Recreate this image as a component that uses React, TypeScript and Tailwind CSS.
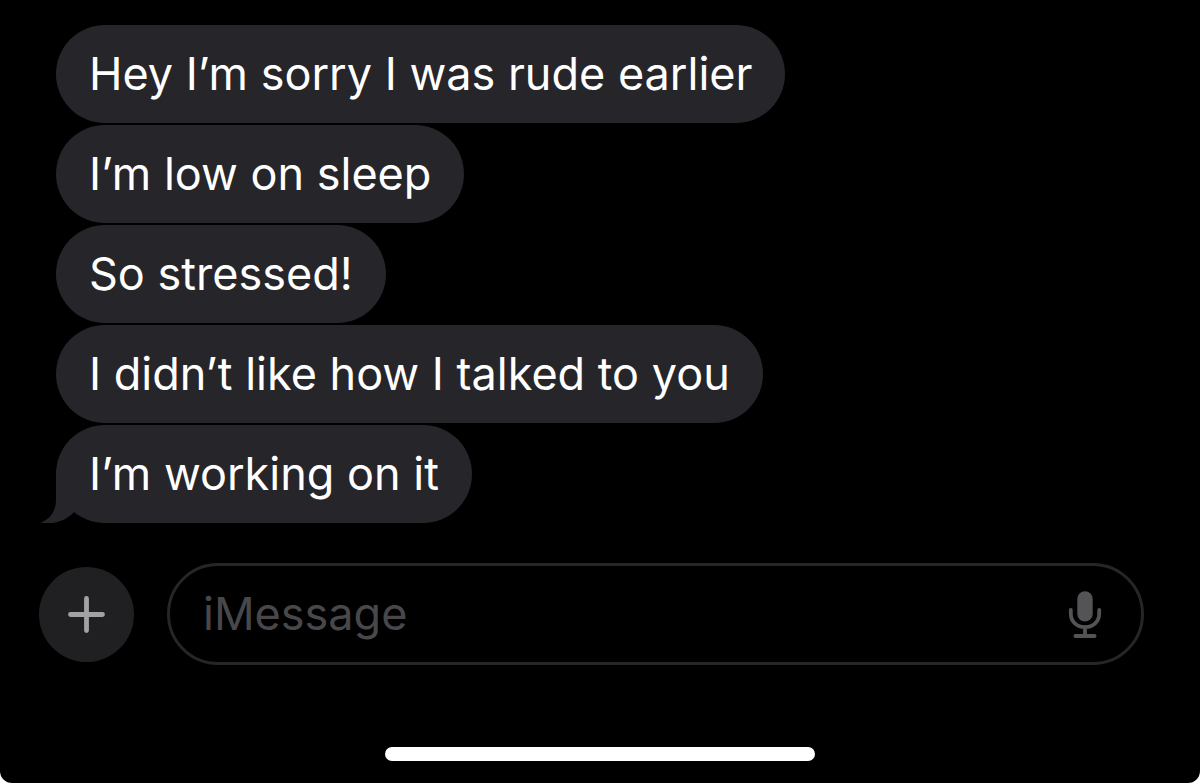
/**
 * Message Thread
 * Received messages, the composer and the home indicator
 */

import { memo, useState } from 'react';
import clsx from 'clsx';

const MESSAGES = [
  'Hey I’m sorry I was rude earlier',
  'I’m low on sleep',
  'So stressed!',
  'I didn’t like how I talked to you',
  'I’m working on it',
];

/**
 * Tail hanging off the lower left of the last bubble
 */
function BubbleTail() {
  return (
    <svg
      className="absolute bottom-0 -left-4 h-13 w-9 text-[#26252a]"
      viewBox="0 0 36 52"
      fill="currentColor"
      aria-hidden="true"
    >
      <path d="M16 0V29C16 40 10 48.5 0.5 51.4C12 54 25 50.5 33.5 41.5L36 38V0Z" />
    </svg>
  );
}

interface BubbleProps {
  text: string;
  /** Last message of the group */
  hasTail?: boolean;
}

const Bubble = memo(function Bubble({ text, hasTail = false }: BubbleProps) {
  return (
    <li
      className={clsx(
        'rounded-[49px] bg-[#26252a] px-[33px] py-[21px] text-[45px] leading-[56px] text-white',
        hasTail && 'relative'
      )}
    >
      {hasTail && <BubbleTail />}
      <p className="relative">{text}</p>
    </li>
  );
});

function PlusIcon() {
  return (
    <svg className="size-10" viewBox="0 0 40 40" fill="none" aria-hidden="true">
      <path
        d="M19.5 4.5V36.5M3.5 20.5H35.5"
        stroke="#a2a2a4"
        strokeWidth="4.8"
        strokeLinecap="round"
      />
    </svg>
  );
}

function MicIcon() {
  return (
    <svg className="h-12 w-9" viewBox="0 0 36 48" fill="none" aria-hidden="true">
      <rect x="10.3" y="1.2" width="15.4" height="30.4" rx="7.7" fill="#545456" />
      <path
        d="M3.8 20V23.5C3.8 31.8 9.8 37.2 18 37.2S32.2 31.8 32.2 23.5V20M18 37V46M8.4 46H27.6"
        stroke="#545456"
        strokeWidth="3.8"
        strokeLinecap="round"
      />
    </svg>
  );
}

function Composer() {
  const [draft, setDraft] = useState('');

  return (
    <form
      className="mt-10 flex items-center gap-[33px] pr-14 pl-[39px]"
      onSubmit={(e) => e.preventDefault()}
    >
      <button
        type="button"
        aria-label="Add attachment"
        className="flex size-[95px] shrink-0 items-center justify-center rounded-full bg-[#202022]"
      >
        <PlusIcon />
      </button>
      <div className="flex h-[102px] min-w-0 flex-1 items-center rounded-full border-3 border-[#262628] pr-[38px] pl-[33px]">
        <input
          type="text"
          aria-label="iMessage"
          placeholder="iMessage"
          value={draft}
          onChange={(e) => setDraft(e.target.value)}
          className="min-w-0 flex-1 bg-transparent text-[45px] leading-[56px] text-white outline-none placeholder:text-[#48484b]"
        />
        <button type="button" aria-label="Dictate" className="shrink-0">
          <MicIcon />
        </button>
      </div>
    </form>
  );
}

export default function App() {
  return (
    <div className="bg-white font-['Inter',sans-serif]">
      <main className="flex min-h-screen flex-col rounded-b-xl bg-black pt-[25px] pb-[22px]">
        <ul className="flex flex-col items-start gap-0.5 pl-14">
          {MESSAGES.map((text, i) => (
            <Bubble key={text} text={text} hasTail={i === MESSAGES.length - 1} />
          ))}
        </ul>
        <Composer />
        {/* Home indicator */}
        <div className="mx-auto mt-auto h-3.5 w-[430px] rounded-full bg-white" />
      </main>
    </div>
  );
}
